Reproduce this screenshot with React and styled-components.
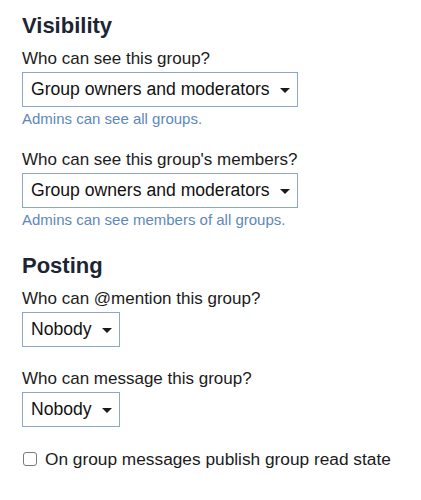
import React from "react";
import styled, { createGlobalStyle } from "styled-components";

const GlobalStyle = createGlobalStyle`
  html, body {
    margin: 0;
    padding: 0;
    background: #ffffff;
  }
  body {
    font-family: "Liberation Sans", Arial, sans-serif;
    color: #1b1b1b;
  }
`;

const visibilityFields = [
  {
    id: "visibility",
    label: "Who can see this group?",
    value: "Group owners and moderators",
    help: "Admins can see all groups.",
  },
  {
    id: "members-visibility",
    label: "Who can see this group's members?",
    value: "Group owners and moderators",
    help: "Admins can see members of all groups.",
  },
];

const postingFields = [
  { id: "mentionable", label: "Who can @mention this group?", value: "Nobody" },
  { id: "messageable", label: "Who can message this group?", value: "Nobody" },
];

function SelectField({ id, label, value, help }) {
  return (
    <Field>
      <Label htmlFor={id}>{label}</Label>
      <Select id={id} type="button">
        <span>{value}</span>
        <Caret />
      </Select>
      {help && <Help>{help}</Help>}
    </Field>
  );
}

function App() {
  return (
    <>
      <GlobalStyle />
      <Page>
        <Section>
          <Heading>Visibility</Heading>
          {visibilityFields.map((f) => (
            <SelectField key={f.id} {...f} />
          ))}
        </Section>
        <Section>
          <Heading>Posting</Heading>
          {postingFields.map((f) => (
            <SelectField key={f.id} {...f} />
          ))}
          <CheckRow>
            <Checkbox type="checkbox" />
            <span>On group messages publish group read state</span>
          </CheckRow>
        </Section>
      </Page>
    </>
  );
}

export default App;

const Page = styled.div`
  padding: 13px 22px 20px;
`;

const Section = styled.section`
  display: flex;
  flex-direction: column;
  align-items: flex-start;
  & + & {
    margin-top: 2px;
  }
`;

const Heading = styled.h2`
  margin: 0 0 10px;
  font-size: 22px;
  line-height: 26px;
  font-weight: 700;
  color: #1c2533;
`;

const Field = styled.div`
  display: flex;
  flex-direction: column;
  align-items: flex-start;
  margin-bottom: 22px;
`;

const Label = styled.label`
  font-size: 17px;
  line-height: 20px;
  color: #1b1b1b;
  margin-bottom: 3px;
`;

const Select = styled.button`
  display: inline-flex;
  align-items: center;
  gap: 10px;
  height: 35px;
  box-sizing: border-box;
  padding: 0 7px 0 8px;
  margin: 0;
  border: 1px solid #8ea7c7;
  border-radius: 0;
  background: #ffffff;
  font-family: "Liberation Sans", Arial, sans-serif;
  font-size: 17.6px;
  color: #111111;
  cursor: pointer;
`;

const Caret = styled.span`
  width: 0;
  height: 0;
  border-left: 5px solid transparent;
  border-right: 5px solid transparent;
  border-top: 5px solid #1b1b1b;
  margin-top: 1px;
`;

const Help = styled.div`
  margin-top: 3px;
  font-size: 15px;
  line-height: 18px;
  color: #5d88b9;
`;

const CheckRow = styled.label`
  display: flex;
  align-items: center;
  gap: 8px;
  font-size: 17.3px;
  line-height: 20px;
  color: #1b1b1b;
`;

const Checkbox = styled.input`
  appearance: none;
  width: 14px;
  height: 14px;
  margin: 0 0 0 1px;
  border: 1px solid #7a7a7a;
  border-radius: 3px;
  background: #ffffff;
  box-sizing: border-box;
`;
